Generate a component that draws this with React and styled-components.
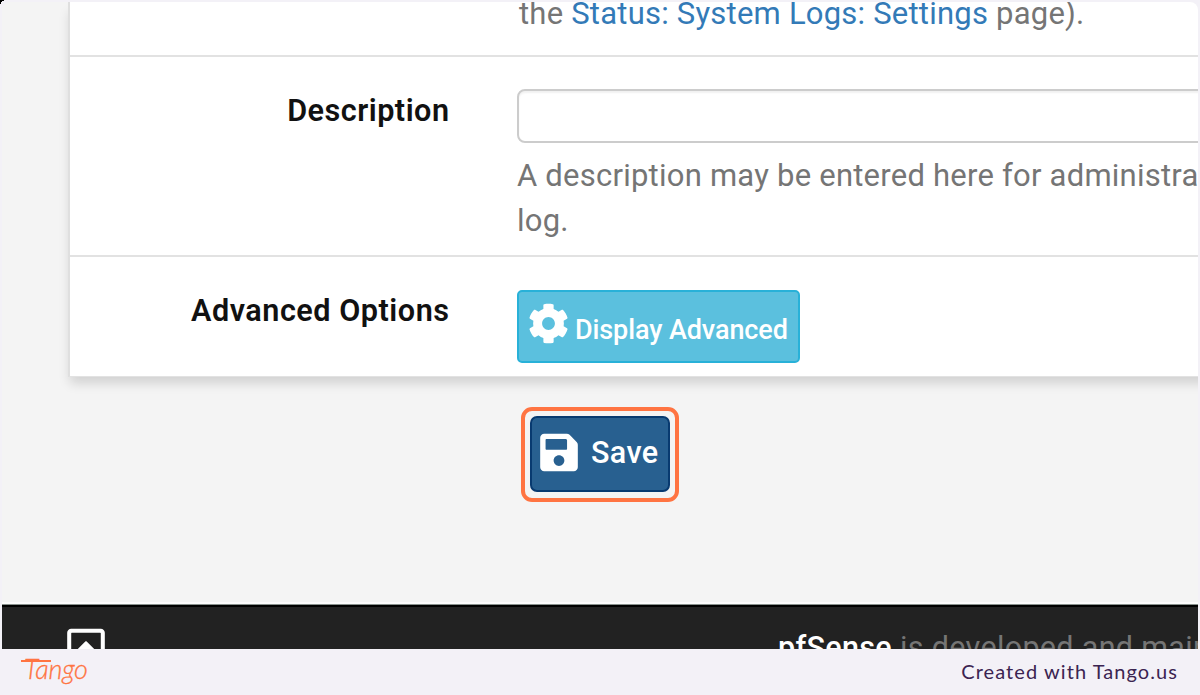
import React from "react";
import styled, { createGlobalStyle } from "styled-components";
import { FaCog, FaSave, FaRegCaretSquareUp } from "react-icons/fa";

const GlobalStyle = createGlobalStyle`
  * { box-sizing: border-box; }
  body { margin: 0; background: #f3f1f7; overflow: hidden; }
`;

const Frame = styled.div`
  position: relative;
  width: 1200px;
  height: 695px;
  padding: 2px 2px 0;
  background: #f3f1f7;
  font-family: Roboto, "Liberation Sans", sans-serif;
  white-space: nowrap;
  overflow: hidden;
`;

const CornerMark = styled.svg`
  position: absolute;
  left: 0;
  top: 0;
`;

const Capture = styled.main`
  display: flex;
  flex-direction: column;
  height: 647px;
  background: #f4f4f4;
  border-radius: 8px 8px 0 0;
  overflow: hidden;
`;

const Panel = styled.section`
  flex: none;
  margin: 0 -30px 0 66px;
  border-left: 2px solid #dfdfdf;
  border-bottom: 1px solid #e2e2e2;
  background: #fff;
  box-shadow: 0 8px 11px -2px rgba(0, 0, 0, 0.15);
`;

const Row = styled.div`
  display: grid;
  grid-template-columns: 379px 1fr;
  column-gap: 68px;
  height: ${(p) => p.$height}px;
  border-bottom: ${(p) => (p.$last ? "none" : "2px solid #e2e2e2")};
`;

const Label = styled.div`
  padding-top: 34px;
  text-align: right;
  font-size: 30.6px;
  line-height: 40px;
  font-weight: 600;
  letter-spacing: ${(p) => p.$track}px;
  margin-right: -${(p) => p.$track}px;
  color: #111;
`;

const Field = styled.div`
  padding-top: ${(p) => p.$top}px;
`;

const Help = styled.p`
  margin: 0;
  font-size: 31px;
  line-height: 45px;
  letter-spacing: ${(p) => p.$track}px;
  color: #757575;
`;

const TopHelp = styled(Help)`
  margin: -11px 0 0 2px;
`;

const Link = styled.a`
  color: #337ab7;
`;

const TextInput = styled.input`
  display: block;
  width: 740px;
  height: 54px;
  margin: 0 0 10px -0.5px;
  border: 2px solid #ccc;
  border-radius: 8px;
  background: #fff;
  box-shadow: inset 0 2px 2px rgba(0, 0, 0, 0.06);
`;

const InfoButton = styled.button`
  display: flex;
  gap: 6px;
  width: 283px;
  height: 73px;
  padding: 11px 0 0 9px;
  border: 2px solid #28b1d8;
  border-radius: 5px;
  background: #5bc0de;
  color: #fff;
  font: 500 27px/50px Roboto, sans-serif;
  letter-spacing: ${(p) => p.$track}px;
  svg { flex: none; width: 41px; height: 41px; }
  span { padding-top: 2px; }
`;

const Highlight = styled.div`
  flex: none;
  width: 158px;
  height: 95px;
  margin: 30px 0 0 519px;
  padding: 5px;
  border: 4px solid #ff7442;
  border-radius: 11px;
`;

const SaveButton = styled.button`
  display: flex;
  align-items: flex-start;
  gap: 13px;
  width: 140px;
  height: 76px;
  padding: 13px 0 0 8px;
  border: 2px solid #083a70;
  border-radius: 7px;
  background: #286090;
  color: #fff;
  font: 500 30.5px/44px Roboto, sans-serif;
  letter-spacing: ${(p) => p.$track}px;
  svg { flex: none; width: 38px; height: 43px; }
`;

const PageFooter = styled.footer`
  display: flex;
  justify-content: space-between;
  height: 44px;
  margin-top: auto;
  padding: 19px 0 0 65px;
  border-top: 2px solid #000;
  box-shadow: 0 -1px 0 #89918d, 0 -3px 0 #fcfcfc;
  background: #222;
  color: #fff;
  svg { flex: none; width: 38px; height: 43px; }
`;

const Credit = styled.div`
  width: 420px;
  margin-top: 2px;
  font-size: 30.5px;
  line-height: 40px;
  letter-spacing: ${(p) => p.$track}px;
  color: #757575;
  b { color: #fff; font-weight: 500; }
`;

const BrandBar = styled.div`
  display: flex;
  justify-content: space-between;
  height: 46px;
  padding: 0 20px 0 17px;
`;

const Wordmark = styled.span`
  position: relative;
  padding-left: 5px;
  color: #ff7442;
  font: italic 300 27px/39px Lato, sans-serif;
  letter-spacing: ${(p) => p.$track}px;
  -webkit-text-stroke: 0.3px #ff7442;
  &::before {
    content: "";
    position: absolute;
    left: 2px;
    top: 11px;
    width: 30px;
    height: 1.5px;
    background: #ff7442;
  }
`;

const Made = styled.span`
  color: #3b2451;
  font: 400 20px/44px Lato, sans-serif;
  letter-spacing: ${(p) => p.$track}px;
`;

export default function App() {
  return (
    <>
      <GlobalStyle />
      <Frame>
        <CornerMark width="5" height="5" viewBox="0 0 5 5">
          <path d="M0 0H4V1H2V2H1V4H0Z" fill="#000" />
        </CornerMark>
        <Capture>
          <Panel>
            <Row $height={55}>
              <div />
              <Field $top={0}>
                <TopHelp $track={0.22}>
                  the <Link>Status: System Logs: Settings</Link> page).
                </TopHelp>
              </Field>
            </Row>
            <Row $height={200}>
              <Label $track={0.5}>Description</Label>
              <Field $top={32}>
                <TextInput aria-label="Description" />
                <Help $track={0.23}>
                  A description may be entered here for administrative reference
                  <br />
                  log.
                </Help>
              </Field>
            </Row>
            <Row $height={119} $last>
              <Label $track={0.52}>Advanced Options</Label>
              <Field $top={33}>
                <InfoButton $track={-0.1}>
                  <FaCog />
                  <span>Display Advanced</span>
                </InfoButton>
              </Field>
            </Row>
          </Panel>
          <Highlight>
            <SaveButton $track={0.4}>
              <FaSave />
              <span>Save</span>
            </SaveButton>
          </Highlight>
          <PageFooter>
            <FaRegCaretSquareUp />
            <Credit $track={0.33}>
              <b>pfSense</b> is developed and maintained
            </Credit>
          </PageFooter>
        </Capture>
        <BrandBar>
          <Wordmark $track={-0.2}>Tango</Wordmark>
          <Made $track={1.07}>Created with Tango.us</Made>
        </BrandBar>
      </Frame>
    </>
  );
}
